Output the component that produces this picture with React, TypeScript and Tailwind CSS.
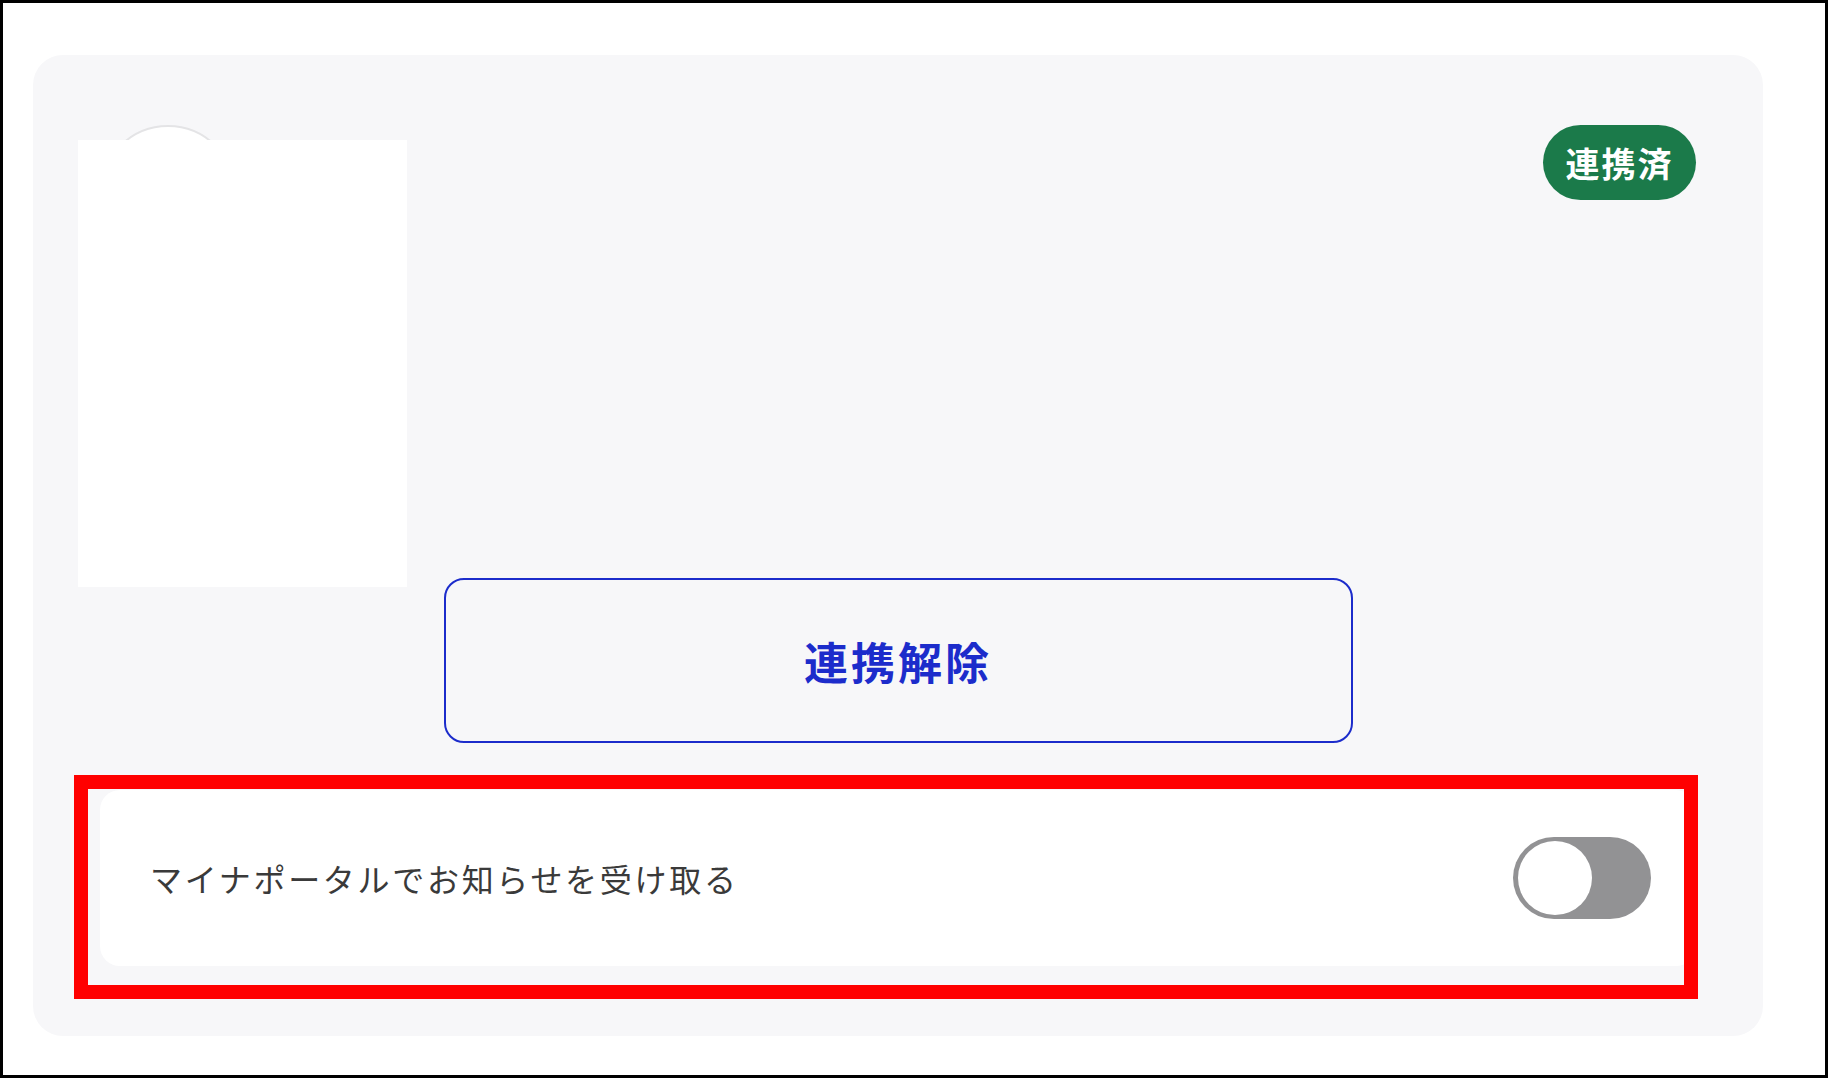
import { useState } from 'react'

const jp = { fontFamily: '"Noto Sans CJK JP", "Noto Sans", sans-serif' }

function Toggle({ on, onChange }: { on: boolean; onChange: (v: boolean) => void }) {
  return (
    <button
      type="button"
      onClick={() => onChange(!on)}
      className={`relative h-[82px] w-[138px] shrink-0 rounded-full transition-colors ${
        on ? 'bg-[#1b7a4a]' : 'bg-[#929294]'
      }`}
    >
      <span
        className={`absolute top-[4px] h-[74px] w-[74px] rounded-full bg-white transition-all ${
          on ? 'left-[60px]' : 'left-[5px]'
        }`}
      />
    </button>
  )
}

export default function App() {
  const [notify, setNotify] = useState(false)

  return (
    <div className="h-[1079px] w-[1830px] bg-white" style={jp}>
      <div className="h-[1078px] w-[1828px] border-[3px] border-black pl-[30px] pt-[52px]">
        {/* Linked service card */}
        <div className="relative flex w-[1730px] flex-col rounded-[30px] bg-[#f7f7f9] px-[67px] pt-[70px] pb-[70px]">
          <div className="flex items-start justify-between">
            <div className="h-[136px] w-[136px] rounded-full border-2 border-[#e4e4e6] bg-white" />
            <span className="flex h-[75px] w-[153px] items-center justify-center rounded-full bg-[#1b7a4a] text-[34px] font-bold tracking-[2px] text-white">
              連携済
            </span>
          </div>

          <button
            type="button"
            className="mt-[317px] flex h-[165px] w-[909px] items-center justify-center self-center rounded-[20px] border-2 border-[#1c2ccb] text-[44px] font-bold tracking-[3px] text-[#1c2ccb]"
          >
            連携解除
          </button>

          {/* Notification setting */}
          <div className="mt-[47px] flex h-[176px] items-center justify-between rounded-[20px] bg-white pl-[50px] pr-[45px]">
            <span className="text-[32px] tracking-[2.7px] text-[#3a3a3a]">
              マイナポータルでお知らせを受け取る
            </span>
            <Toggle on={notify} onChange={setNotify} />
          </div>

          {/* redacted area */}
          <div className="absolute left-[45px] top-[85px] h-[447px] w-[329px] bg-white" />

          {/* highlight annotation */}
          <div className="pointer-events-none absolute left-[41px] top-[720px] h-[224px] w-[1624px] border-[14px] border-[#ff0000]" />
        </div>
      </div>
    </div>
  )
}
